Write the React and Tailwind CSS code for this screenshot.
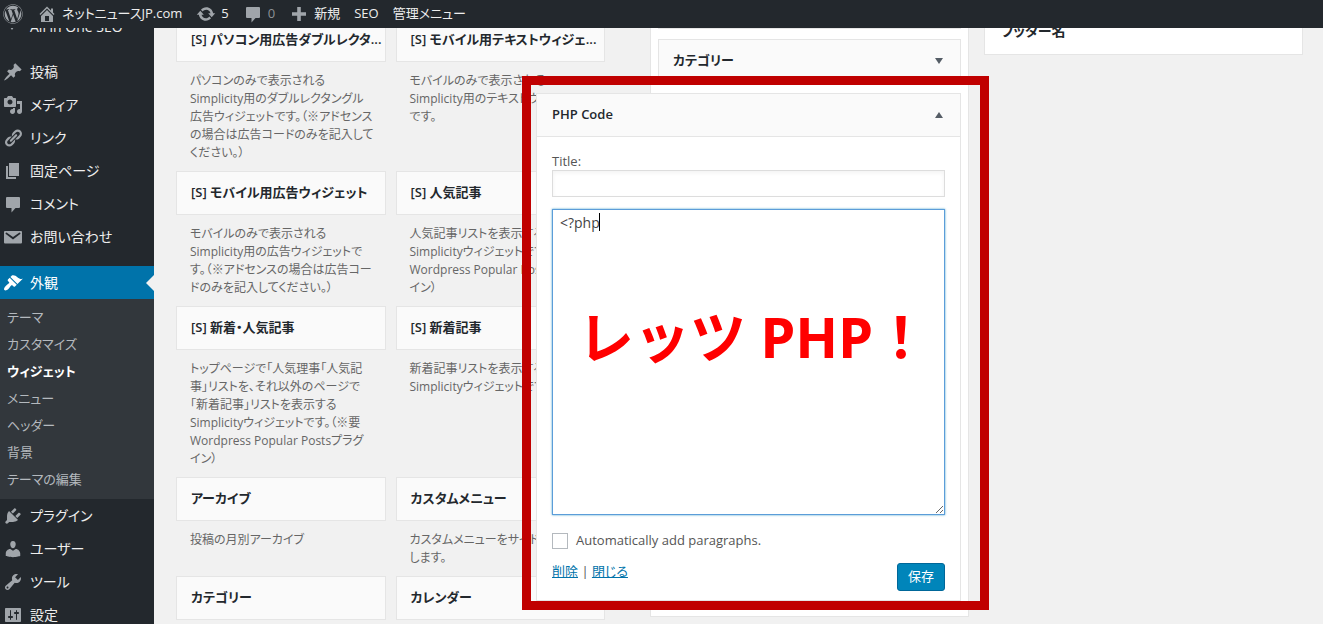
import { FaWordpress } from "react-icons/fa";

const ICONS = {
  home: "M16 8.5l1.53 1.53-1.06 1.06L10 4.6l-6.47 6.49-1.06-1.06L10 2.5l4 4v-2h2v4zm-6-2.46l6 5.99V18H4v-5.97zM12 17v-5H8v5h4z",
  update: "M10.2 3.28c3.53 0 6.43 2.61 6.92 6h2.08l-3.5 4-3.5-4h2.32c-.45-1.97-2.21-3.45-4.32-3.45-1.45 0-2.73.71-3.54 1.78L4.95 5.66C6.23 4.2 8.11 3.28 10.2 3.28zm-.4 13.44c-3.52 0-6.43-2.61-6.92-6H.8l3.5-4c1.17 1.33 2.33 2.67 3.5 4H5.48c.45 1.97 2.21 3.45 4.32 3.45 1.45 0 2.73-.71 3.54-1.78l1.71 1.95c-1.28 1.46-3.15 2.38-5.25 2.38z",
  comment: "M4 3h12q1 0 1 1v9q0 1-1 1h-3.500l-4 4.500V14H4q-1 0-1-1V4q0-1 1-1z",
  plus: "M8.200 3h3.600v5.200H17v3.600h-5.200V17H8.200v-5.200H3V8.200h5.200z",
  post: "M10.44 3.02l1.82-1.82 6.36 6.35-1.83 1.82c-1.05-.68-2.48-.57-3.41.36l-.75.75c-.92.93-1.04 2.35-.35 3.41l-1.83 1.82-2.41-2.41-2.8 2.79c-.42.42-3.38 2.71-3.8 2.29s1.86-3.39 2.28-3.81l2.79-2.79L4.1 9.36l1.83-1.82c1.05.69 2.48.57 3.4-.36l.75-.75c.93-.92 1.05-2.35.36-3.41z",
  media: "M13 11V4c0-.55-.45-1-1-1h-1.67L9 1H5L3.67 3H2c-.55 0-1 .45-1 1v7c0 .55.45 1 1 1h10c.55 0 1-.45 1-1zM7 4.5c1.38 0 2.5 1.12 2.5 2.5S8.38 9.5 7 9.5 4.5 8.38 4.5 7 5.62 4.5 7 4.5zM14 6h5v10.5c0 1.38-1.12 2.5-2.5 2.5S14 17.88 14 16.5s1.12-2.5 2.5-2.5c.17 0 .34.02.5.05V9h-3V6zm-4 8.05V13h2v3.5c0 1.38-1.12 2.5-2.5 2.5S7 17.88 7 16.5 8.12 14 9.5 14c.17 0 .34.02.5.05z",
  link: "M17.74 2.76c1.68 1.69 1.68 4.41 0 6.1l-1.53 1.52c-1.12 1.12-2.7 1.47-4.14 1.09l2.62-2.61.76-.77.76-.76c.84-.84.84-2.2 0-3.04-.84-.85-2.2-.85-3.04 0l-.77.76-3.38 3.38c-.37-1.44-.02-3.02 1.1-4.14l1.52-1.53c1.69-1.68 4.42-1.68 6.1 0zM8.59 13.43l5.34-5.34c.42-.42.42-1.1 0-1.52-.44-.43-1.13-.39-1.53 0l-5.33 5.34c-.42.42-.42 1.1 0 1.52.44.43 1.13.39 1.52 0zm-.76 2.29l4.14-4.15c.38 1.44.03 3.02-1.09 4.14l-1.52 1.53c-1.69 1.68-4.41 1.68-6.1 0-1.68-1.68-1.68-4.42 0-6.1l1.53-1.52c1.12-1.12 2.7-1.47 4.14-1.1l-4.14 4.15c-.85.84-.85 2.2 0 3.05.84.84 2.2.84 3.04 0z",
  page: "M6 15V2h10v13H6zm-1 1h8v2H3V5h2v11z",
  mail: "M2 4h16q1 0 1 1v10.500q0 1-1 1H2q-1 0-1-1V5q0-1 1-1zm8 8.600l7.200-5.600q.5-.7.1-1.100-.6-.5-1.200-.1L10 10 3.900 5.800q-.7-.4-1.200.1-.4.4.1 1.100z",
  appearance: "M14.48 11.06L7.41 3.99l1.5-1.5c.5-.56 2.3-.47 3.51.32 1.21.8 1.43 1.28 2.91 2.1 1.18.64 2.45 1.26 4.45.85zm-.71.71L6.7 4.7 4.93 6.47c-.39.39-.39 1.02 0 1.41l1.06 1.06c.39.39.39 1.03 0 1.42-.6.6-1.43 1.11-2.21 1.69-.35.26-.7.53-1.01.84C1.43 14.23.4 16.08 1.4 17.07c.99 1 2.84-.03 4.18-1.36.31-.31.58-.66.85-1.02.57-.78 1.08-1.61 1.69-2.21.39-.39 1.02-.39 1.41 0l1.06 1.06c.39.39 1.02.39 1.41 0z",
  plugin: "M13.11 4.36L9.87 7.6 8 5.73l3.24-3.24c.35-.34 1.05-.2 1.56.32.52.51.66 1.21.31 1.55zm-8 1.77l.91-1.12 9.01 9.01-1.19.84c-.71.71-2.63 1.16-3.82 1.16H6.14L4.9 17.26c-.59.59-1.54.59-2.12 0-.59-.58-.59-1.53 0-2.12l1.24-1.24v-3.88c0-1.13.4-3.19 1.09-3.89zm7.26 3.97l3.24-3.24c.34-.35 1.04-.21 1.55.31.52.51.66 1.21.31 1.55l-3.24 3.25z",
  user: "M10 9.25c-2.27 0-2.73-3.44-2.73-3.44C7 4.02 7.82 2 9.97 2c2.16 0 2.98 2.02 2.71 3.81 0 0-.41 3.44-2.68 3.44zm0 2.57L12.72 10c2.39 0 4.52 2.33 4.52 4.53v2.49s-3.65 1.13-7.24 1.13c-3.65 0-7.24-1.13-7.24-1.13v-2.49c0-2.25 1.94-4.48 4.47-4.48z",
  tool: "M16.68 9.77c-1.34 1.34-3.3 1.67-4.95.99l-5.41 6.52c-.99.99-2.59.99-3.58 0s-.99-2.59 0-3.57l6.52-5.42c-.68-1.65-.35-3.61.99-4.95 1.28-1.28 3.12-1.62 4.72-1.06l-2.89 2.89 2.82 2.82 2.86-2.87c.53 1.58.18 3.39-1.08 4.65zM3.81 16.21c.4.39 1.04.39 1.43 0 .4-.4.4-1.04 0-1.43-.39-.4-1.03-.4-1.43 0-.39.39-.39 1.03 0 1.43z",
  settings: "M18 16V4c0-.55-.45-1-1-1H3c-.55 0-1 .45-1 1v12c0 .55.45 1 1 1h14c.55 0 1-.45 1-1zM8 11h1c.55 0 1 .45 1 1s-.45 1-1 1H8v1.5c0 .28-.22.5-.5.5s-.5-.22-.5-.5V13H6c-.55 0-1-.45-1-1s.45-1 1-1h1V5.5c0-.28.22-.5.5-.5s.5.22.5.5V11zm5-2h-1c-.55 0-1-.45-1-1s.45-1 1-1h1V5.5c0-.28.22-.5.5-.5s.5.22.5.5V7h1c.55 0 1 .45 1 1s-.45 1-1 1h-1v5.5c0 .28-.22.5-.5.5s-.5-.22-.5-.5V9z",
  shield: "M5 7h8l-4 6z",
};

const MENU_TOP = [
  { icon: "post", label: "投稿" },
  { icon: "media", label: "メディア" },
  { icon: "link", label: "リンク" },
  { icon: "page", label: "固定ページ" },
  { icon: "comment", label: "コメント" },
  { icon: "mail", label: "お問い合わせ" },
];

const SUBMENU = ["テーマ", "カスタマイズ", "ウィジェット", "メニュー", "ヘッダー", "背景", "テーマの編集"];

const MENU_BOTTOM = [
  { icon: "plugin", label: "プラグイン" },
  { icon: "user", label: "ユーザー" },
  { icon: "tool", label: "ツール" },
  { icon: "settings", label: "設定" },
];

const WIDGETS = [
  {
    title: "[S] パソコン用広告ダブルレクタ...",
    text: "パソコンのみで表示される\nSimplicity用のダブルレクタングル\n広告ウィジェットです。（※アドセンス\nの場合は広告コードのみを記入して\nください。）",
  },
  {
    title: "[S] モバイル用テキストウィジェ...",
    text: "モバイルのみで表示される\nSimplicity用のテキストウィジェット\nです。",
  },
  {
    title: "[S] モバイル用広告ウィジェット",
    text: "モバイルのみで表示される\nSimplicity用の広告ウィジェットで\nす。（※アドセンスの場合は広告コー\nドのみを記入してください。）",
  },
  {
    title: "[S] 人気記事",
    text: "人気記事リストを表示する\nSimplicityウィジェットです。（※要\nWordpress Popular Postsプラグ\nイン）",
  },
  {
    title: "[S] 新着・人気記事",
    text: "トップページで「人気理事「人気記\n事」リストを、それ以外のページで\n「新着記事」リストを表示する\nSimplicityウィジェットです。（※要\nWordpress Popular Postsプラグ\nイン）",
  },
  {
    title: "[S] 新着記事",
    text: "新着記事リストを表示する\nSimplicityウィジェットです。",
  },
  { title: "アーカイブ", text: "投稿の月別アーカイブ" },
  { title: "カスタムメニュー", text: "カスタムメニューをサイドバーに追加\nします。" },
  { title: "カテゴリー", text: "" },
  { title: "カレンダー", text: "" },
];

const Icon = ({ name, className = "" }) => (
  <svg viewBox="0 0 20 20" fill="currentColor" fillRule="evenodd" aria-hidden="true" className={`shrink-0 ${className}`}>
    <path d={ICONS[name]} />
  </svg>
);

const BarItem = ({ icon, children }) => (
  <a href="#" className="flex items-center gap-[5px] whitespace-nowrap text-[#eeeeee]">
    {icon && <Icon name={icon} className="size-5 text-[#a0a5aa]" />}
    {children}
  </a>
);

const AdminBar = () => (
  <header className="relative z-30 flex h-7 shrink-0 items-center gap-[14px] bg-[#23282d] pl-[3px] text-[13px]">
    <a href="#" aria-label="WordPress" className="text-[#a0a5aa]">
      <FaWordpress className="size-5" />
    </a>
    <BarItem icon="home">ネットニュースJP.com</BarItem>
    <BarItem icon="update">5</BarItem>
    <BarItem icon="comment">
      <span className="text-[#8c9196]">0</span>
    </BarItem>
    <BarItem icon="plus">新規</BarItem>
    <BarItem>SEO</BarItem>
    <BarItem>管理メニュー</BarItem>
  </header>
);

const MenuItem = ({ icon, label }) => (
  <li>
    <a href="#" className="flex h-[33px] items-center gap-[7px] pl-[3px] text-[#eeeeee]">
      <Icon name={icon} className="size-5 text-[#a0a5aa]" />
      {label}
    </a>
  </li>
);

const Sidebar = () => (
  <nav className="-mt-[19px] w-[154px] shrink-0 bg-[#23282d] text-sm whitespace-nowrap">
    <ul>
      <li className="mb-[11px]">
        <a href="#" className="flex h-[35px] items-center gap-[7px] pl-[3px] text-[#eeeeee]">
          <Icon name="shield" className="size-5 text-[#a0a5aa]" />
          All in One SEO
        </a>
      </li>
      {MENU_TOP.map((item) => (
        <MenuItem key={item.label} {...item} />
      ))}
      <li className="mt-[13px]">
        <a href="#" className="flex h-[33px] items-center gap-[7px] bg-[#0073aa] pl-[3px] text-white">
          <Icon name="appearance" className="size-5" />
          <span className="flex-1">外観</span>
          <svg viewBox="0 0 8 16" className="h-4 w-2" fill="#f1f1f1" aria-hidden="true">
            <path d="M8 0v16L0 8z" />
          </svg>
        </a>
        <ul className="bg-[#32373c] pt-[5px] pb-[6px] text-[13px]">
          {SUBMENU.map((label) => (
            <li key={label}>
              <a
                href="#"
                className={`flex h-[27px] items-center pl-[7px] ${
                  label === "ウィジェット" ? "font-semibold text-white" : "text-[#b4b9be]"
                }`}
              >
                {label}
              </a>
            </li>
          ))}
        </ul>
      </li>
      {MENU_BOTTOM.map((item) => (
        <MenuItem key={item.label} {...item} />
      ))}
    </ul>
  </nav>
);

const WidgetCard = ({ title, text }) => (
  <article className="min-w-0">
    <h3 className="flex h-11 items-center overflow-hidden border border-[#e5e5e5] bg-[#fafafa] px-[14px] text-[13px] font-semibold whitespace-nowrap text-[#23282d]">
      {title}
    </h3>
    <p className="mt-[10px] mb-[9px] pl-[14px] text-xs leading-[18px] whitespace-pre text-[#666666]">{text}</p>
  </article>
);

const Toggle = ({ open }) => (
  <svg viewBox="0 0 8 6" className="h-[6px] w-2" fill="#555d66" aria-hidden="true">
    <path d={open ? "M4 0l4 6H0z" : "M0 0h8L4 6z"} />
  </svg>
);

const PhpWidget = () => (
  <section className="relative z-10 mt-[10px] -ml-[122px] border border-[#e5e5e5] bg-white">
    <h3 className="border-b border-[#e5e5e5] bg-[#fafafa] text-[13px] font-semibold text-[#23282d]">
      <button type="button" className="flex h-[42px] w-full items-center justify-between pr-[17px] pl-[15px]">
        PHP Code
        <Toggle open />
      </button>
    </h3>
    <form className="px-[15px] pt-[15px] pb-[9px] text-[13px] text-[#555555]">
      <label htmlFor="title" className="block h-[18px] leading-[18px]">
        Title:
      </label>
      <input id="title" type="text" className="block h-[27px] w-full border border-[#dddddd] bg-white px-[6px] shadow-inner outline-none" />
      <div className="relative mt-3">
        <textarea
          aria-label="PHP Code"
          defaultValue="<?php"
          className="block h-[306px] w-full resize border border-[#5b9dd9] bg-white px-[7px] py-[3px] text-sm leading-5 text-[#444444] shadow-[0_0_2px_rgba(30,140,190,0.8)] outline-none"
        />
        <span className="absolute top-1 left-[47px] h-[18px] w-px bg-black" />
        <p className="pointer-events-none absolute top-[87px] left-[26px] font-['Noto_Sans','Noto_Sans_CJK_JP',sans-serif] text-[56px] leading-[80px] font-bold whitespace-nowrap text-[#ff0000] [font-feature-settings:normal]">
          レッツ PHP！
        </p>
      </div>
      <label className="mt-4 flex h-5 items-center gap-2">
        <input type="checkbox" className="size-4 appearance-none border border-[#b4b9be] bg-white" />
        Automatically add paragraphs.
      </label>
      <div className="mt-3 flex justify-between">
        <div className="leading-4">
          <a href="#" className="text-[#0073aa] underline">削除</a>
          {" | "}
          <a href="#" className="text-[#0073aa] underline">閉じる</a>
        </div>
        <button type="button" className="h-7 w-12 rounded-[3px] border border-[#006799] bg-[#0085ba] text-white">
          保存
        </button>
      </div>
    </form>
    {/* red annotation frame around the opened widget */}
    <div className="pointer-events-none absolute -top-[18px] -right-[29px] -bottom-[10px] -left-[15px] border-[9px] border-[#c00000]" />
  </section>
);

const App = () => (
  <div className="flex h-screen flex-col overflow-hidden bg-[#f1f1f1] font-['Open_Sans','Noto_Sans_CJK_JP',sans-serif] [font-feature-settings:'palt']">
    <AdminBar />
    <div className="flex min-h-0 flex-1">
      <Sidebar />
      <main className="-mt-[10px] grid min-w-0 flex-1 grid-cols-[429fr_653fr] items-start gap-x-[45px] pr-5 pl-[22px]">
        <div className="grid grid-cols-2 gap-x-[10px]">
          {WIDGETS.map((widget) => (
            <WidgetCard key={widget.title} {...widget} />
          ))}
        </div>
        <div className="grid grid-cols-2 items-start gap-x-[15px]">
          <section className="border border-[#e5e5e5] bg-white px-[7px] pb-[15px]">
            <div className="h-[10px] border-b border-[#e5e5e5]" />
            <h3 className="mt-[10px] border border-[#e5e5e5] bg-[#fafafa] text-[13px] font-semibold text-[#23282d]">
              <button type="button" className="flex h-[42px] w-full items-center justify-between pr-[17px] pl-[14px]">
                カテゴリー
                <Toggle />
              </button>
            </h3>
            <PhpWidget />
          </section>
          <section className="border border-[#e5e5e5] bg-white">
            <h2 className="text-sm font-semibold text-[#23282d]">
              <button type="button" className="flex h-[35px] w-full items-start justify-between pr-[22px] pl-4 leading-6">
                フッター名
                <Toggle />
              </button>
            </h2>
          </section>
        </div>
      </main>
    </div>
  </div>
);

export default App;
